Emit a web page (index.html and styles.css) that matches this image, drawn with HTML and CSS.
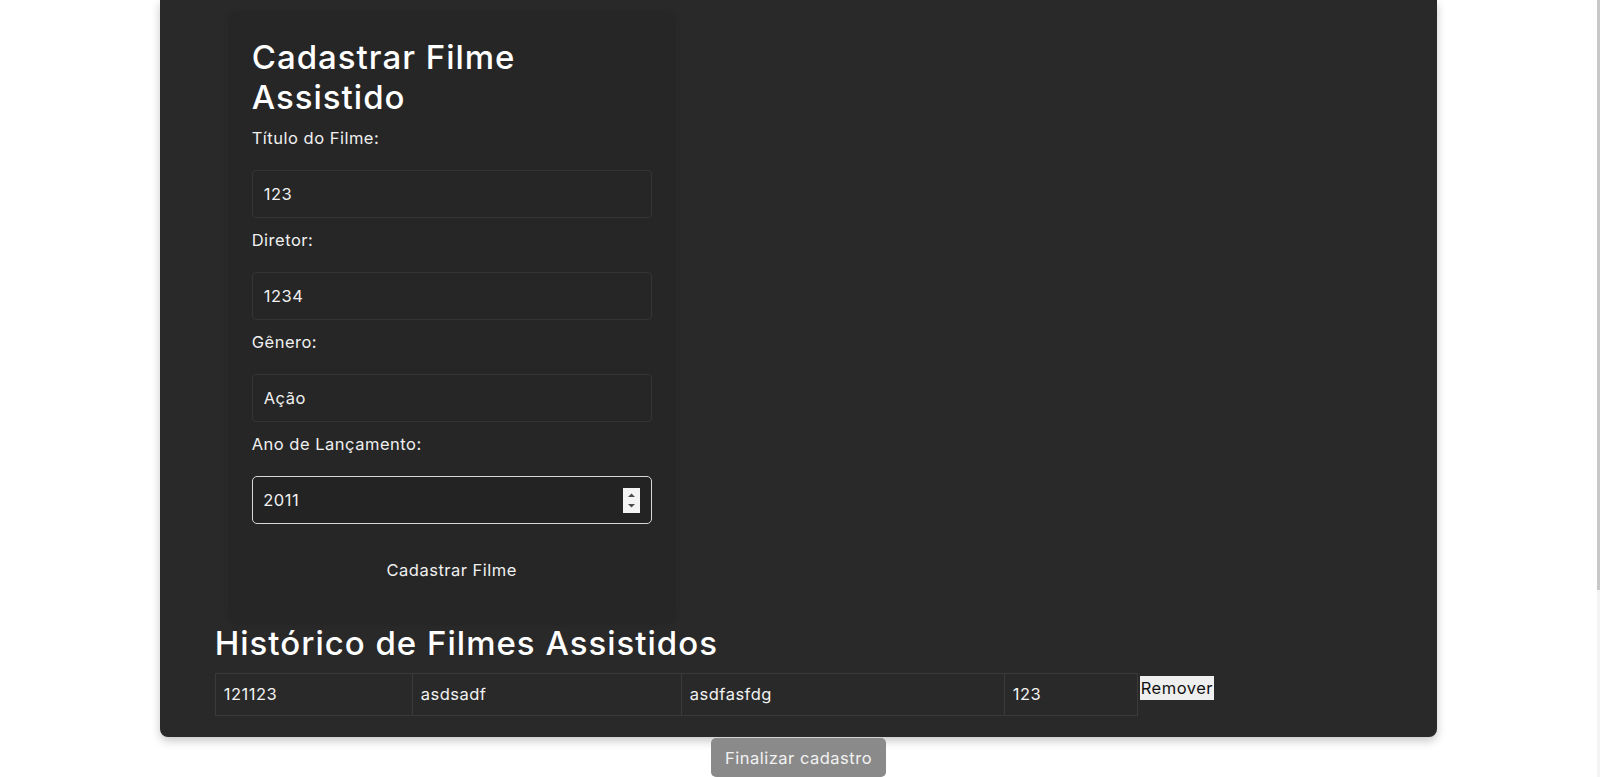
FILE: index.html
```html
<!DOCTYPE html>
<html lang="pt-BR">
<head>
<meta charset="utf-8">
<title>Cadastro de Filmes</title>
<link rel="stylesheet" href="styles.css">
</head>
<body>
<div class="page">
  <main class="panel">
    <section class="card">
      <h2 class="card-title">Cadastrar Filme Assistido</h2>
      <form class="form">
        <label class="field-label" for="titulo">Título do Filme:</label>
        <input class="field" id="titulo" type="text" value="123">
        <label class="field-label" for="diretor">Diretor:</label>
        <input class="field" id="diretor" type="text" value="1234">
        <label class="field-label" for="genero">Gênero:</label>
        <input class="field" id="genero" type="text" value="Ação">
        <label class="field-label" for="ano">Ano de Lançamento:</label>
        <div class="field field-focus">
          <input class="field-inner" id="ano" type="text" value="2011">
          <span class="spin">
            <svg width="17" height="25" viewBox="0 0 17 25"><rect width="17" height="25" fill="#f3f3f3"/><path d="M5 9 L8.5 5.5 L12 9 Z" fill="#4a4a4a"/><path d="M5 16 L8.5 19.5 L12 16 Z" fill="#4a4a4a"/></svg>
          </span>
        </div>
        <button class="submit" type="button">Cadastrar Filme</button>
      </form>
    </section>
    <h2 class="history-title">Histórico de Filmes Assistidos</h2>
    <div class="history">
      <div class="row">
        <div class="cell c1">121123</div>
        <div class="cell c2">asdsadf</div>
        <div class="cell c3">asdfasfdg</div>
        <div class="cell c4">123</div>
        <button class="remove" type="button">Remover</button>
      </div>
    </div>
  </main>
  <div class="finish-wrap">
    <button class="finish" type="button">Finalizar cadastro</button>
  </div>
</div>
<div class="scrollbar"><div class="thumb"></div></div>
</body>
</html>
```

FILE: styles.css
```css
* { box-sizing: border-box; }

html, body {
  margin: 0;
  height: 777px;
  overflow: hidden;
  background: #ffffff;
}

body {
  display: flex;
  font-family: Inter, "Noto Sans", sans-serif;
  font-size: 16.5px;
  letter-spacing: 0.5px;
  color: #f2f2f2;
}

.page {
  flex: 1;
  display: flex;
  flex-direction: column;
}

.panel {
  width: 80%;
  margin: 0 auto;
  background: #292929;
  border-radius: 0 0 8px 8px;
  box-shadow: 0 4px 10px rgba(0, 0, 0, 0.22);
  padding: 13px 55px 21px;
}

.card {
  width: 444px;
  margin-left: 15px;
  padding: 24px 22px 31px;
  background: #262626;
  border-radius: 8px;
  box-shadow: 0 0 6px rgba(0, 0, 0, 0.18);
}

.card-title {
  margin: 0 0 9px;
  max-width: 340px;
  font-size: 33px;
  line-height: 40px;
  letter-spacing: 1px;
  font-weight: 500;
  color: #ffffff;
}

.form {
  display: flex;
  flex-direction: column;
}

.field-label {
  display: block;
  margin-bottom: 20px;
  font-size: 16.5px;
  line-height: 24px;
  color: #f0f0f0;
}

.field {
  width: 100%;
  height: 48px;
  margin: 0 0 10px;
  padding: 0 11px;
  background: #262626;
  border: 1px solid #353535;
  border-radius: 4px;
  font-family: inherit;
  font-size: 16.5px;
  letter-spacing: 0.5px;
  color: #f0f0f0;
  outline: none;
}

.field-focus {
  display: flex;
  align-items: center;
  background: #232323;
  border: 1.5px solid #d8d8d8;
  border-radius: 5px;
  padding: 0 11px 0 10.5px;
}

.field-inner {
  flex: 1;
  min-width: 0;
  background: transparent;
  border: none;
  padding: 0;
  font-family: inherit;
  font-size: 16.5px;
  letter-spacing: 0.5px;
  color: #f0f0f0;
  outline: none;
}

.spin {
  display: flex;
  width: 17px;
  height: 25px;
}

.submit {
  margin-top: 14px;
  padding: 10px;
  background: transparent;
  border: none;
  font-family: inherit;
  font-size: 16.5px;
  letter-spacing: 0.5px;
  line-height: 24px;
  color: #f0f0f0;
  cursor: pointer;
}

.history-title {
  margin: 0 0 10px;
  font-size: 33px;
  line-height: 40px;
  letter-spacing: 1px;
  font-weight: 500;
  color: #ffffff;
}

.row {
  display: flex;
  align-items: flex-start;
}

.cell {
  height: 43px;
  padding: 8px 8px;
  border: 1px solid #3a3a3a;
  font-size: 16.5px;
  line-height: 25px;
  color: #f2f2f2;
}

.cell + .cell { border-left: none; }

.c1 { width: 198px; }
.c2 { width: 269px; }
.c3 { width: 323px; }
.c4 { width: 133px; }

.remove {
  margin: 2px 0 0 1px;
  height: 26px;
  padding: 0 1px;
  background: #efefef;
  border: 1px solid #2a2a2a;
  font-family: inherit;
  font-size: 16.5px;
  letter-spacing: 0.5px;
  line-height: 24px;
  color: #111111;
}

.finish-wrap {
  display: flex;
  justify-content: center;
  margin-top: 1px;
}

.finish {
  height: 39px;
  padding: 0 14px;
  background: #8a8a8a;
  border: none;
  border-radius: 5px;
  font-family: inherit;
  font-size: 16.5px;
  letter-spacing: 0.5px;
  line-height: 24px;
  color: #f2f2f2;
}

.scrollbar {
  width: 3px;
  background: #f4f4f4;
}

.thumb {
  height: 590px;
  background: #c8c8c8;
}
```
